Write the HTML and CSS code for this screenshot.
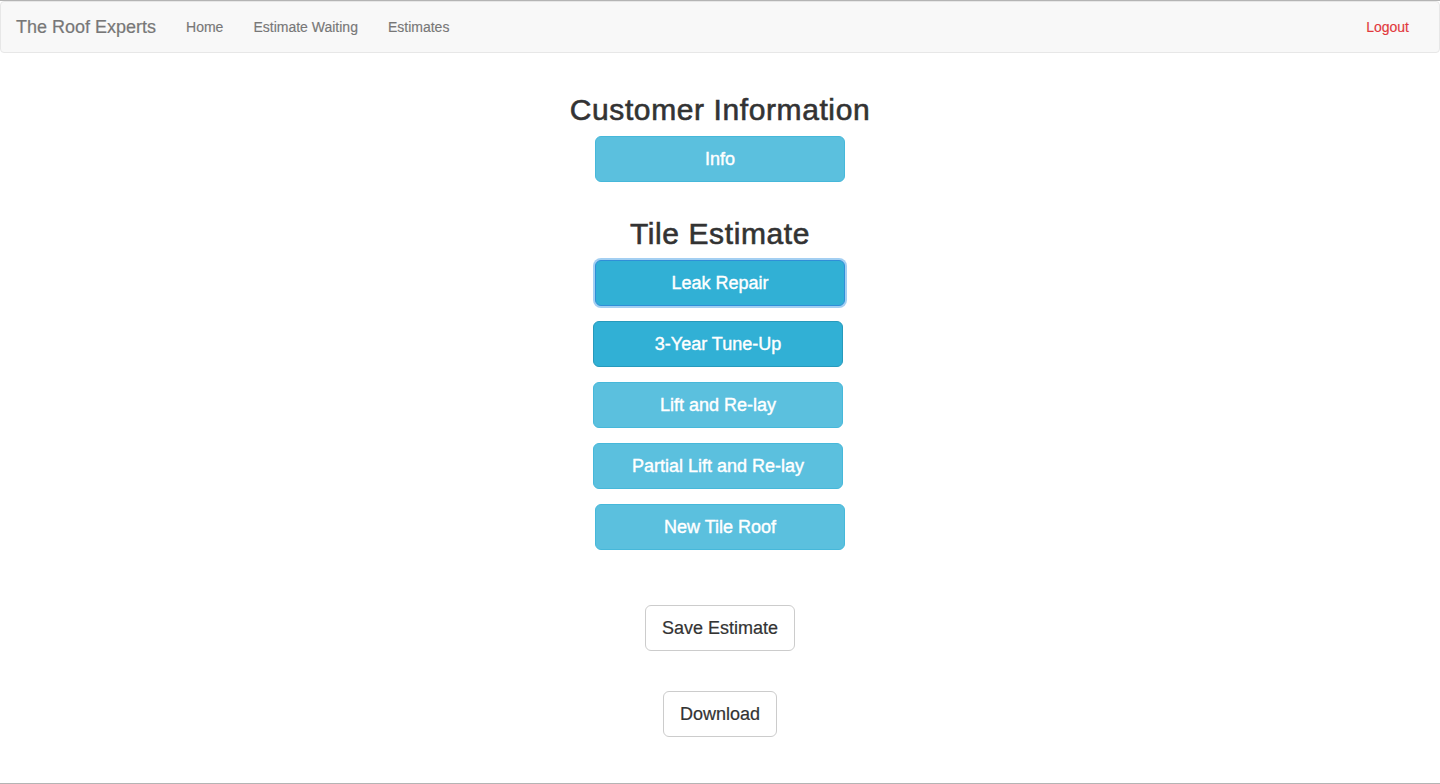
FILE: index.html
```html
<!DOCTYPE html>
<html lang="en">
<head>
<meta charset="utf-8">
<title>The Roof Experts</title>
<link rel="stylesheet" href="styles.css">
</head>
<body>
<nav class="navbar">
  <a class="brand" href="#">The Roof Experts</a>
  <ul class="nav">
    <li><a href="#">Home</a></li>
    <li><a href="#">Estimate Waiting</a></li>
    <li><a href="#">Estimates</a></li>
  </ul>
  <a class="logout" href="#">Logout</a>
</nav>
<main class="main">
  <h2 class="title">Customer Information</h2>
  <button class="btn btn-info">Info</button>
  <h2 class="title title-tile">Tile Estimate</h2>
  <div class="stack">
    <button class="btn btn-info is-active is-focus">Leak Repair</button>
    <button class="btn btn-info is-active shift">3-Year Tune-Up</button>
    <button class="btn btn-info shift">Lift and Re-lay</button>
    <button class="btn btn-info shift">Partial Lift and Re-lay</button>
    <button class="btn btn-info">New Tile Roof</button>
  </div>
  <button class="btn btn-default save">Save Estimate</button>
  <button class="btn btn-default download">Download</button>
</main>
</body>
</html>
```
FILE: styles.css
```css
* { box-sizing: border-box; }
html { height: 784px; }
body {
  margin: 0;
  height: 784px;
  border-top: 1px solid #b4b4b4;
  border-bottom: 1px solid #b4b4b4;
  font-family: "Liberation Sans", Arial, sans-serif;
  font-size: 14px;
  color: #333;
  background: #fff;
}
a { text-decoration: none; }
.navbar {
  display: flex;
  align-items: center;
  height: 52px;
  background: #f8f8f8;
  border: 1px solid #e7e7e7;
  border-radius: 4px;
  padding: 0 15px;
}
.brand {
  font-size: 18px;
  line-height: 20px;
  color: #777;
  padding: 15px 15px 15px 0;
  -webkit-text-stroke: 0.2px #777;
}
.nav {
  display: flex;
  list-style: none;
  margin: 0;
  padding: 0;
}
.nav a {
  display: block;
  padding: 15px;
  line-height: 20px;
  color: #777;
  -webkit-text-stroke: 0.15px #777;
}
.logout {
  margin-left: auto;
  padding: 15px;
  line-height: 20px;
  color: #e2383d;
  -webkit-text-stroke: 0.15px #e2383d;
}
.main {
  display: flex;
  flex-direction: column;
  align-items: center;
}
.title {
  margin: 40px 0 10px;
  font-size: 30px;
  line-height: 33px;
  font-weight: 400;
  color: #333;
  letter-spacing: 0.6px;
  -webkit-text-stroke: 0.6px #333;
}
.title-tile { margin-top: 35px; }
.stack {
  display: flex;
  flex-direction: column;
  align-items: center;
  gap: 15px;
}
.btn {
  font-family: inherit;
  font-size: 18px;
  line-height: 24px;
  padding: 10px 16px;
  border: 1px solid transparent;
  border-radius: 6px;
  cursor: pointer;
  margin: 0;
}
.btn-info {
  width: 250px;
  color: #fff;
  background: #5bc0de;
  border-color: #46b8da;
  -webkit-text-stroke: 0.4px #fff;
}
.btn-info.is-active {
  background: #31b0d5;
  border-color: #269abc;
}
.btn-info.is-focus {
  border-color: #2f8fd8;
  box-shadow: 0 0 0 2px rgba(102, 175, 233, 0.6);
}
.btn-info.shift { transform: translateX(-2px); }
.btn-default {
  color: #333;
  background: #fff;
  border-color: #ccc;
  -webkit-text-stroke: 0.2px #333;
}
.save { margin-top: 55px; }
.download { margin-top: 40px; }
```
